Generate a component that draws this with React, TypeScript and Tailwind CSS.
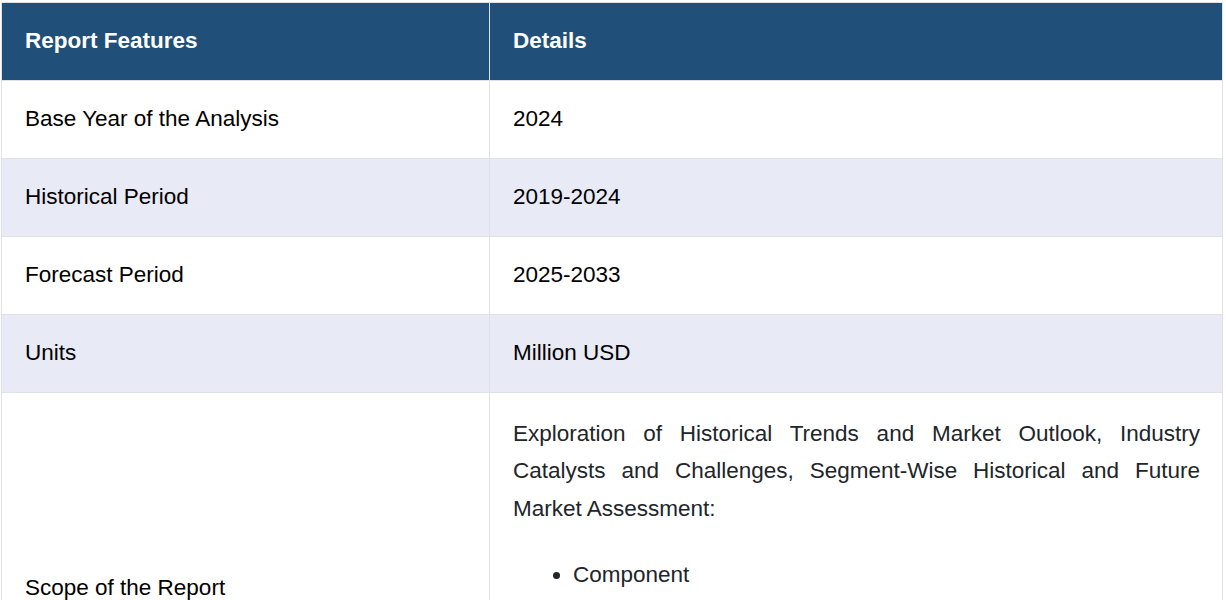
import React from "react";

const rows: { label: string; value: string; striped: boolean }[] = [
  { label: "Base Year of the Analysis", value: "2024", striped: false },
  { label: "Historical Period", value: "2019-2024", striped: true },
  { label: "Forecast Period", value: "2025-2033", striped: false },
  { label: "Units", value: "Million USD", striped: true },
];

export default function App() {
  return (
    <div className="min-h-screen bg-white pt-[2px] pl-[1px]" style={{ fontFamily: '"Liberation Sans", Arial, sans-serif' }}>
      <div className="w-[1222px] border-t border-l border-r border-[#dee2e6] text-[22.5px]">
        <div className="flex h-[78px] border-b border-[#dee2e6] bg-[#204f79] text-white font-bold">
          <div className="w-[488px] shrink-0 border-r border-[#dee2e6] pl-[23px] pb-[2px] flex items-center leading-[25px]">
            Report Features
          </div>
          <div className="flex-1 pl-[23px] pb-[2px] flex items-center leading-[25px]">Details</div>
        </div>
        {rows.map((r) => (
          <div
            key={r.label}
            className={`flex h-[78px] border-b border-[#dee2e6] text-black ${r.striped ? "bg-[#e8eaf6]" : "bg-white"}`}
          >
            <div className="w-[488px] shrink-0 border-r border-[#dee2e6] pl-[23px] pb-[2px] flex items-center leading-[25px]">
              {r.label}
            </div>
            <div className="flex-1 pl-[23px] pb-[2px] flex items-center leading-[25px]">{r.value}</div>
          </div>
        ))}
        <div className="flex min-h-[389px] border-b border-[#dee2e6] bg-white">
          <div className="w-[488px] shrink-0 border-r border-[#dee2e6] pl-[23px] flex items-center leading-[25px] text-black">
            Scope of the Report
          </div>
          <div className="flex-1 pl-[23px] pr-[22px] pt-[22px] pb-[22px] text-[#212529]">
            <p className="text-justify leading-[37.4px]">
              Exploration of Historical Trends and Market Outlook, Industry Catalysts and Challenges, Segment-Wise Historical and Future Market Assessment:
            </p>
            <ul className="mt-[29px] list-disc pl-[60px] leading-[37.4px]">
              <li>Component</li>
            </ul>
          </div>
        </div>
      </div>
    </div>
  );
}
